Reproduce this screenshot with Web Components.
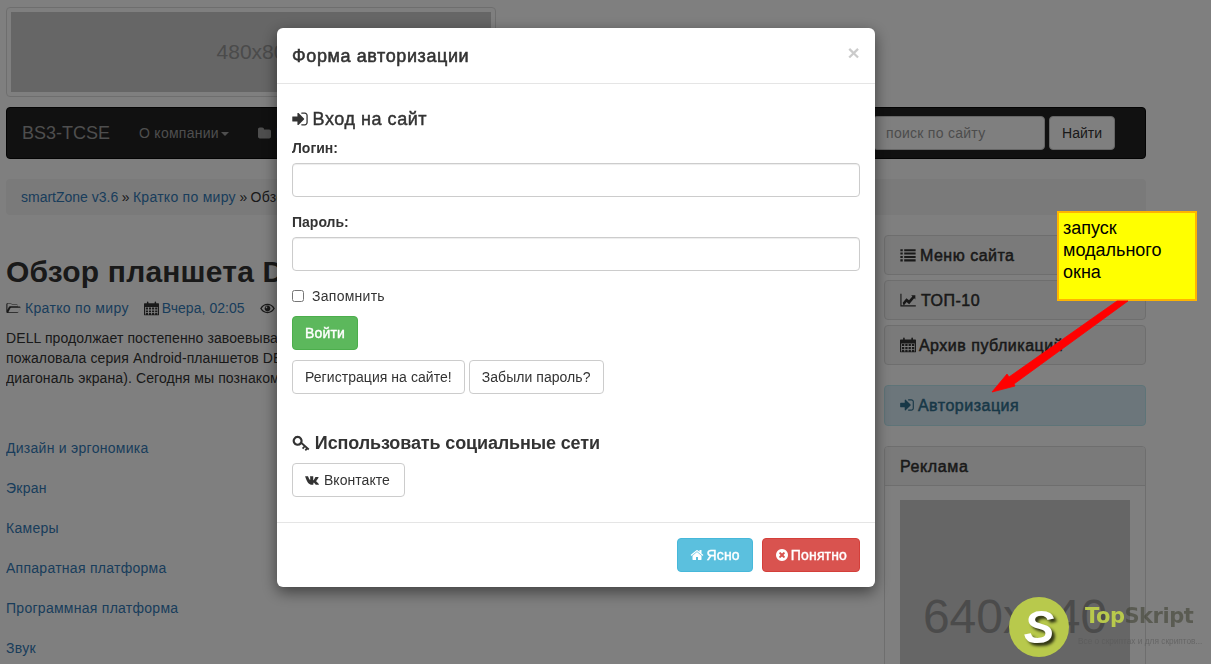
<!DOCTYPE html>
<html lang="ru">
<head>
<meta charset="utf-8">
<title>BS3-TCSE</title>
<style>
html, body { margin:0; height:100%; overflow:hidden; background:#fff; }
body { font:14px/20px "Liberation Sans", Arial, sans-serif; color:#333; letter-spacing:.27px; }
</style>
</head>
<body>
<site-page>
	<thumb-box></thumb-box>
	<top-nav>
		<nav-item caret>О компании</nav-item>
		<nav-item><fa-icon name="folder"></fa-icon> Новости</nav-item>
	</top-nav>
	<crumb-bar></crumb-bar>
	<main-grid>
		<article-col></article-col>
		<side-col slot="side">
			<side-btn><fa-icon name="list"></fa-icon> Меню сайта</side-btn>
			<side-btn><fa-icon name="chart"></fa-icon> ТОП-10</side-btn>
			<side-btn><fa-icon name="calendar"></fa-icon> Архив публикаций</side-btn>
			<side-btn info><fa-icon name="signin"></fa-icon> Авторизация</side-btn>
			<ad-panel></ad-panel>
		</side-col>
	</main-grid>
</site-page>
<modal-backdrop></modal-backdrop>
<login-modal></login-modal>
<note-callout>запуск модального окна</note-callout>
<skript-logo></skript-logo>

<script>
const ICONS = {
	signin: '<path d="M1312 896q0 26-19 45l-544 544q-19 19-45 19t-45-19-19-45v-288h-448q-26 0-45-19t-19-45v-384q0-26 19-45t45-19h448v-288q0-26 19-45t45-19 45 19l544 544q19 19 19 45zm352-352v704q0 119-84.5 203.5t-203.5 84.5h-320q-13 0-22.5-9.5t-9.5-22.5q0-4-1-20t-.5-26.5 3-23.5 10-19.5 20.5-6.5h320q66 0 113-47t47-113v-704q0-66-47-113t-113-47h-312l-11.5-1-11.5-3-8-5.5-7-9-2-13.5q0-4-1-20t-.5-26.5 3-23.5 10-19.5 20.5-6.5h320q119 0 203.5 84.5t84.5 203.5z"/>',
	home: '<path d="M1472 992v480q0 26-19 45t-45 19h-384v-384h-256v384h-384q-26 0-45-19t-19-45v-480q0-1 .5-3t.5-3l575-474 575 474q1 2 1 6zm223-69l-62 74q-8 9-21 11h-3q-13 0-21-7l-692-577-692 577q-12 8-24 7-13-2-21-11l-62-74q-8-10-7-23.5t11-21.5l719-599q32-26 76-26t76 26l244 204v-195q0-14 9-23t23-9h192q14 0 23 9t9 23v408l219 182q10 8 11 21.5t-7 23.5z"/>',
	close: '<path d="M1277 1122q0-26-19-45l-181-181 181-181q19-19 19-45 0-27-19-46l-90-90q-19-19-46-19-26 0-45 19l-181 181-181-181q-19-19-45-19-27 0-46 19l-90 90q-19 19-19 46 0 26 19 45l181 181-181 181q-19 19-19 45 0 27 19 46l90 90q19 19 46 19 26 0 45-19l181-181 181 181q19 19 45 19 27 0 46-19l90-90q19-19 19-46zm387-226q0 209-103 385.5t-279.5 279.5-385.5 103-385.5-103-279.5-279.5-103-385.5 103-385.5 279.5-279.5 385.5-103 385.5 103 279.5 279.5 103 385.5z"/>',
	folder: '<path d="M1664 656v704q0 92-66 158t-158 66h-1216q-92 0-158-66t-66-158v-960q0-92 66-158t158-66h320q92 0 158 66t66 158v32h672q92 0 158 66t66 158z"/>',
	list: '<path d="M40 240h270v230h-270zM470 240h1280v230h-1280zM40 620h270v230h-270zM470 620h1280v230h-1280zM40 1000h270v230h-270zM470 1000h1280v230h-1280zM40 1380h270v230h-270zM470 1380h1280v230h-1280z"/>',
	chart: '<path d="M40 200h130v1290h1600v130h-1730z"/><path d="M300 1210l420-510 290 230 370-440-130-130h470v470l-130-130-560 660-290-230-330 400z"/>',
	calendar: '<path fill-rule="evenodd" d="M70 280h280v-130q0-90 90-90t90 90v130h740v-130q0-90 90-90t90 90v130h270q70 0 70 70v1290q0 70-70 70h-1650q-70 0-70-70v-1290q0-70 70-70zm60 450v890h1530v-890zm90 60h260v230h-260zm370 0h260v230h-260zm370 0h260v230h-260zm370 0h260v230h-260zm-1110 330h260v230h-260zm370 0h260v230h-260zm370 0h260v230h-260zm370 0h260v230h-260zm-1110 320h260v180h-260zm370 0h260v180h-260zm370 0h260v180h-260zm370 0h260v180h-260z"/>',
	folderOpen: '<path fill-rule="evenodd" d="M40 400q0-130 130-130h370q90 0 130 60l50 80h560q130 0 130 130v130h200q130 0 120 110l-240 560q-40 90-140 90h-1180q-130 0-130-130zm130-20v700l180-380q40-70 130-70h950v-110q0-30-30-30h-620q-50 0-80-40l-60-90q-20-20-50-20h-350q-70 0-70 40zm120 970h1160q40 0 50-30l220-480q0-20-30-20h-1090q-60 0-80 40l-240 470q0 20 10 20z"/>',
	eye: '<path fill-rule="evenodd" d="M896 340q540 0 880 556-340 556-880 556t-880-556q340-556 880-556zm0 150q-450 0-690 406 240 406 690 406t690-406q-240-406-690-406zm0 60a346 346 0 1 1-1 0zm-120 110a90 90 0 1 0 1 0z"/>',
	key: '<path fill-rule="evenodd" d="M560 180a500 500 0 0 1 470 660l700 640-120 140-90-80-130 150-130-120 130-150-100-90-170 190-130-120 170-190-220-200a500 500 0 1 1-380-830zm0 220a280 280 0 1 0 1 0z"/>',
	vk: '<path d="M0 470h300c20 0 40 10 50 40 60 170 130 300 190 370 20 20 40 20 40-20v-280c0-60-20-80-50-100l30-10h330c20 0 30 20 30 40v390c0 30 20 40 40 20 60-70 130-190 190-330 10-20 20-30 50-30h290c30 0 40 20 30 40-40 120-190 320-250 400-20 30-20 50 0 70 70 70 230 200 290 300 20 30 0 50-30 50h-280c-30 0-50-10-70-30-60-70-110-140-170-180-30-20-70-20-70 30v130c0 40-10 50-50 50h-110c-310 0-560-260-760-930-10-30 0-40 10-40z"/>'
};

// small helper: every element gets an open shadow root with its own style
function element(name, css, html, setup) {
	customElements.define(name, class extends HTMLElement {
		connectedCallback() {
			if (this.shadowRoot) return;
			const root = this.attachShadow({mode: 'open'});
			const tpl = document.createElement('template');
			tpl.innerHTML = `<style>${css}</style>${typeof html === 'function' ? html(this) : html}`;
			root.appendChild(tpl.content.cloneNode(true));
			if (setup) setup(this, root);
		}
	});
}

element('fa-icon', `
	:host { display:inline-block; width:1em; height:1em; vertical-align:-.12em; -webkit-text-stroke:0; }
	svg { display:block; width:100%; height:100%; fill:currentColor; }
`, el => `<svg viewBox="0 0 1792 1792" aria-hidden="true">${ICONS[el.getAttribute('name')] || ''}</svg>`);

element('site-page', `
	:host { display:block; padding:7px 65px 0 6px; }
`, '<slot></slot>');

element('thumb-box', `
	:host { display:block; width:480px; padding:4px; border:1px solid #ddd; border-radius:4px; background:#fff; }
	div { height:80px; background:#ccc; color:#969696; font-size:21px; line-height:80px; text-align:center; letter-spacing:0; }
`, '<div>480x80</div>');

element('top-nav', `
	:host { display:flex; align-items:center; box-sizing:border-box; height:52px; margin-top:10px; padding:0 30px 0 15px; background:#222; border:1px solid #080808; border-radius:4px; }
	.brand { font-size:18px; color:#9d9d9d; margin-right:29px; letter-spacing:0; }
	.links { display:flex; gap:29px; }
	form { margin:0 0 0 auto; display:flex; gap:4px; }
	input { box-sizing:border-box; width:172px; height:34px; padding:6px 12px; border:1px solid #ccc; border-radius:4px; font:14px "Liberation Sans", Arial, sans-serif; letter-spacing:.27px; background:#fff; }
	input::placeholder { color:#999; opacity:1; }
	button { height:34px; padding:0 12px; background:#fff; border:1px solid #ccc; border-radius:4px; color:#333; font:14px "Liberation Sans", Arial, sans-serif; }
`, `<span class="brand">BS3-TCSE</span>
	<div class="links"><slot></slot></div>
	<form><input placeholder="поиск по сайту"><button type="button">Найти</button></form>`);

element('nav-item', `
	:host { display:inline-block; color:#9d9d9d; white-space:nowrap; }
	i { display:inline-block; margin-left:2px; vertical-align:middle; border-top:4px solid; border-left:4px solid transparent; border-right:4px solid transparent; }
`, el => `<slot></slot>${el.hasAttribute('caret') ? '<i></i>' : ''}`);

element('crumb-bar', `
	:host { display:block; margin-top:20px; padding:8px 15px; background:#f5f5f5; border-radius:4px; white-space:nowrap; }
	a { color:#337ab7; text-decoration:none; }
	.latin { letter-spacing:0; }
	span { letter-spacing:-.3px; }
`, '<a class="latin">smartZone v3.6</a><span> » </span><a>Кратко по миру</a><span> » </span>Обзор');

element('main-grid', `
	:host { display:grid; grid-template-columns:minmax(0,1fr) 262px; column-gap:30px; }
`, '<div><slot></slot></div><div><slot name="side"></slot></div>');

element('article-col', `
	:host { display:block; white-space:nowrap; overflow:hidden; }
	h1 { margin:40px 0 10px; font-size:30px; line-height:33px; font-weight:700; color:#333; letter-spacing:.2px; }
	a { color:#337ab7; text-decoration:none; }
	.meta { display:flex; gap:15px; color:#333; }
	.meta span { display:inline-flex; align-items:center; gap:4px; }
	.meta span + span a { letter-spacing:.05px; margin-left:-1px; }
	.meta span:first-child a { letter-spacing:.33px; }
	fa-icon { font-size:15px; vertical-align:0; }
	p { margin:10px 0 50px; letter-spacing:.1px; }
	.toc a { display:block; margin-bottom:20px; }
`, `<h1>Обзор планшета DELL</h1>
	<div class="meta">
		<span><fa-icon name="folderOpen"></fa-icon><a>Кратко по миру</a></span>
		<span><fa-icon name="calendar"></fa-icon><a>Вчера, 02:05</a></span>
		<span><fa-icon name="eye"></fa-icon></span>
	</div>
	<p>DELL продолжает постепенно завоевывать<br>пожаловала серия Android-планшетов DELL<br>диагональ экрана). Сегодня мы познакомимся</p>
	<div class="toc">
		<a>Дизайн и эргономика</a>
		<a>Экран</a>
		<a>Камеры</a>
		<a>Аппаратная платформа</a>
		<a>Программная платформа</a>
		<a>Звук</a>
	</div>`);

element('side-col', `
	:host { display:block; padding-top:20px; }
`, '<slot></slot>');

element('side-btn', `
	:host { display:block; box-sizing:border-box; height:40px; margin-bottom:5px; padding:0 15px; background:#f5f5f5; border:1px solid #ddd; border-radius:4px; color:#333; font-size:16px; font-weight:400; -webkit-text-stroke:.5px currentColor; letter-spacing:.5px; line-height:39px; }
	:host([info]) { height:41px; margin:20px 0; background:#d9edf7; border-color:#bce8f1; color:#31708f; line-height:39px; }
	::slotted(fa-icon[name=list]) { margin-right:-1px; }
	::slotted(fa-icon[name=calendar]) { margin-right:-2px; }
	::slotted(fa-icon[name=signin]) { margin:0 -2px 0 -1px; }
`, '<slot></slot>');

element('ad-panel', `
	:host { display:block; border:1px solid #ddd; border-radius:4px; overflow:hidden; height:300px; }
	h3 { margin:0; padding:11px 15px 9px; height:18px; background:#f5f5f5; border-bottom:1px solid #ddd; font-size:16px; line-height:18px; font-weight:400; -webkit-text-stroke:.5px currentColor; letter-spacing:.6px; color:#333; }
	div.body { padding:14px 15px 15px; }
	div.img { height:234px; background:#ccc; color:#969696; font-size:48px; line-height:234px; text-align:center; letter-spacing:0; }
`, '<h3>Реклама</h3><div class="body"><div class="img">640x640</div></div>');

element('modal-backdrop', `
	:host { position:fixed; inset:0; background:rgba(0,0,0,.5); }
`, '');

element('bs-btn', `
	:host { display:inline-block; box-sizing:border-box; height:34px; padding:6px 12px; border:1px solid #ccc; border-radius:4px; background:#fff; color:#333; font-size:14px; line-height:20px; letter-spacing:.05px; white-space:nowrap; }
	:host([kind]) { -webkit-text-stroke:.4px currentColor; letter-spacing:.15px; color:#fff; }
	:host([kind=success]) { background:#5cb85c; border-color:#4cae4c; }
	:host([kind=info]) { background:#5bc0de; border-color:#46b8da; }
	:host([kind=danger]) { background:#d9534f; border-color:#d43f3a; }
	::slotted(fa-icon[name=home]) { margin-right:-1px; }
	::slotted(fa-icon[name=close]) { margin-right:-2px; }
`, '<slot></slot>');

element('bs-field', `
	:host { display:block; margin-bottom:15px; }
	label { display:block; margin-bottom:5px; font-weight:700; color:#333; letter-spacing:0; }
	input { display:block; box-sizing:border-box; width:100%; height:34px; border:1px solid #ccc; border-radius:4px; box-shadow:inset 0 1px 1px rgba(0,0,0,.075); background:#fff; }
`, el => `<label>${el.getAttribute('label')}</label><input type="${el.getAttribute('type') || 'text'}">`);

element('login-modal', `
	:host { position:fixed; left:277px; top:28px; width:598px; box-sizing:border-box; background:#fff; border-radius:6px; box-shadow:0 5px 15px rgba(0,0,0,.5); color:#333; }
	header { display:flex; justify-content:space-between; align-items:center; box-sizing:border-box; height:56px; padding:0 15px; border-bottom:1px solid #e5e5e5; }
	header h4 { margin:0; font-size:18px; font-weight:400; -webkit-text-stroke:.55px currentColor; letter-spacing:.6px; line-height:20px; }
	header b { font-size:21px; line-height:1; color:#000; opacity:.2; margin-top:-6px; }
	section { padding:25px 15px 25px; }
	h3 { margin:0 0 9px; font-size:18px; line-height:20px; font-weight:400; -webkit-text-stroke:.45px currentColor; letter-spacing:.55px; }
	h3 fa-icon { font-size:18px; vertical-align:-3px; margin:0 -2px 0 -1px; }
	.remember { display:flex; align-items:center; margin:0 0 10px; height:20px; }
	.remember input { margin:0 8px 0 0; width:12px; height:12px; }
	.row { display:flex; gap:4px; margin-top:10px; }
	h3.social { margin:39px 0 10px; font-weight:700; -webkit-text-stroke:0; letter-spacing:-.13px; }
	h3.social fa-icon { margin:0; }
	.vk { width:113px; }
	.vk fa-icon { font-size:16px; vertical-align:-3px; margin-right:-1px; }
	footer { display:flex; justify-content:flex-end; gap:9px; padding:15px; border-top:1px solid #e5e5e5; }
`, `<header><h4>Форма авторизации</h4><b>×</b></header>
	<section>
		<h3><fa-icon name="signin"></fa-icon> Вход на сайт</h3>
		<bs-field label="Логин:"></bs-field>
		<bs-field label="Пароль:" type="password"></bs-field>
		<div class="remember"><input type="checkbox"><span>Запомнить</span></div>
		<bs-btn kind="success">Войти</bs-btn>
		<div class="row"><bs-btn>Регистрация на сайте!</bs-btn><bs-btn>Забыли пароль?</bs-btn></div>
		<h3 class="social"><fa-icon name="key"></fa-icon> Использовать социальные сети</h3>
		<bs-btn class="vk"><fa-icon name="vk"></fa-icon> Вконтакте</bs-btn>
	</section>
	<footer>
		<bs-btn kind="info"><fa-icon name="home"></fa-icon> Ясно</bs-btn>
		<bs-btn kind="danger"><fa-icon name="close"></fa-icon> Понятно</bs-btn>
	</footer>`);

element('note-callout', `
	:host { position:fixed; left:1057px; top:211px; width:140px; height:90px; box-sizing:border-box; padding:4px; background:#ff0; border:2px solid #ffb400; color:#000; font-size:18px; line-height:22px; letter-spacing:0; }
	svg { position:fixed; left:985px; top:295px; overflow:visible; }
`, `<slot></slot>
	<svg width="150" height="105" viewBox="0 0 150 105"><path d="M132 6h11L29 89l1 2-23 6 15-18 2 3z" fill="#f00" stroke="#f00" stroke-width=".8" stroke-linejoin="round"/></svg>`);

element('skript-logo', `
	:host { position:fixed; left:1009px; top:597px; width:200px; height:62px; display:block; letter-spacing:0; }
	.ball { position:absolute; left:0; top:0; width:60px; height:60px; border-radius:50%; background:#b8c94c; color:#fff; font:italic 700 46px/60px "Liberation Sans", Arial, sans-serif; text-align:center; text-shadow:3px 3px 3px rgba(0,0,0,.75); }
	.name { position:absolute; left:76px; top:6px; font:700 21px/26px "DejaVu Sans", sans-serif; letter-spacing:-.5px; color:rgba(60,62,45,.55); white-space:nowrap; }
	.name b { color:#b8c94c; }
	.tag { position:absolute; left:69px; top:38px; font-size:8.3px; line-height:12px; color:rgba(90,90,90,.7); white-space:nowrap; }
`, '<div class="ball">S</div><div class="name"><b>Top</b>Skript</div><div class="tag">Все о скриптах и для скриптов...</div>');
</script>
</body>
</html>
